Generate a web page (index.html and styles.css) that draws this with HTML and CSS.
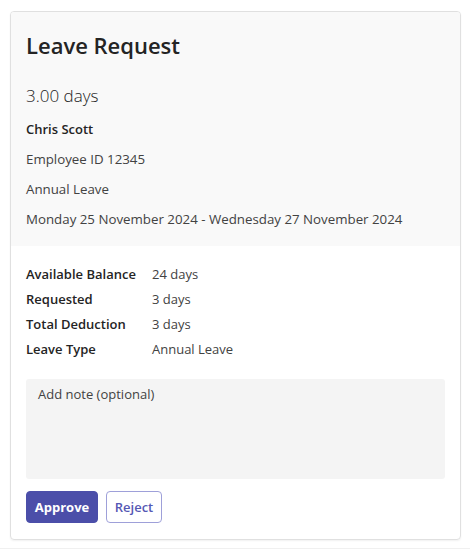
FILE: index.html
```html
<!DOCTYPE html>
<html>
<head>
<meta charset="utf-8">
<link rel="stylesheet" href="styles.css">
</head>
<body>
<div class="card">
  <div class="head">
    <h1 class="title">Leave Request</h1>
    <div class="days">3.00 days</div>
    <div class="line name">Chris Scott</div>
    <div class="line">Employee ID 12345</div>
    <div class="line">Annual Leave</div>
    <div class="line">Monday 25 November 2024 - Wednesday 27 November 2024</div>
  </div>
  <div class="body">
    <div class="facts">
      <div class="k">Available Balance</div><div class="v">24 days</div>
      <div class="k">Requested</div><div class="v">3 days</div>
      <div class="k">Total Deduction</div><div class="v">3 days</div>
      <div class="k">Leave Type</div><div class="v">Annual Leave</div>
    </div>
    <div class="note">Add note (optional)</div>
    <div class="actions">
      <button class="btn primary">Approve</button>
      <button class="btn secondary">Reject</button>
    </div>
  </div>
</div>
<div class="bottomline"></div>
</body>
</html>
```
FILE: styles.css
```css
html, body { margin: 0; padding: 0; background: #fff; }
body {
  font-family: "Open Sans", "Noto Sans", sans-serif;
  color: #242424;
  padding: 11px 9px 0 10px;
}
.card {
  border: 1px solid #e0e0e0;
  border-radius: 4px;
  box-shadow: 0 1px 2px rgba(0,0,0,0.06);
  overflow: hidden;
  width: 449px;
  height: 527px;
  display: flex;
  flex-direction: column;
}
.head {
  background: #f9f9f9;
  padding: 18px 15px 18px;
}
.title {
  margin: 0;
  font-size: 22px;
  font-weight: 600;
  line-height: 30px;
  color: #242424;
}
.days {
  margin-top: 24px;
  font-size: 17px;
  font-weight: 300;
  line-height: 24px;
  color: #242424;
}
.line {
  font-size: 13.3px;
  line-height: 18px;
  margin-top: 12px;
  color: #424242;
}
.line.name { font-weight: 600; color: #242424; margin-top: 12px; font-size: 13px; }
.body { padding: 19px 15px 15px; }
.facts {
  display: grid;
  grid-template-columns: 126px 1fr;
  row-gap: 7px;
  font-size: 13px;
  line-height: 18px;
}
.k { font-weight: 600; color: #242424; }
.v { color: #424242; }
.note {
  margin-top: 21px;
  background: #f4f4f4;
  border-radius: 3px;
  height: 100px;
  box-sizing: border-box;
  padding: 6px 12px;
  font-size: 13px;
  line-height: 18px;
  color: #424242;
}
.actions {
  display: flex;
  gap: 8px;
  margin-top: 12px;
}
.btn {
  font-family: inherit;
  font-size: 13px;
  font-weight: 700;
  height: 32px;
  border-radius: 4px;
  padding: 0 6px;
  box-sizing: border-box;
}
.primary {
  background: #4b4ea9;
  color: #fff;
  border: 1px solid #4b4ea9;
  width: 72px;
}
.secondary {
  background: #fff;
  color: #5558b4;
  border: 1px solid #9ea0d9;
  font-weight: 600;
  width: 56px;
}
.bottomline {
  margin: 8px -9px 0 -10px;
  border-top: 1px solid #f0f0f0;
}
```
